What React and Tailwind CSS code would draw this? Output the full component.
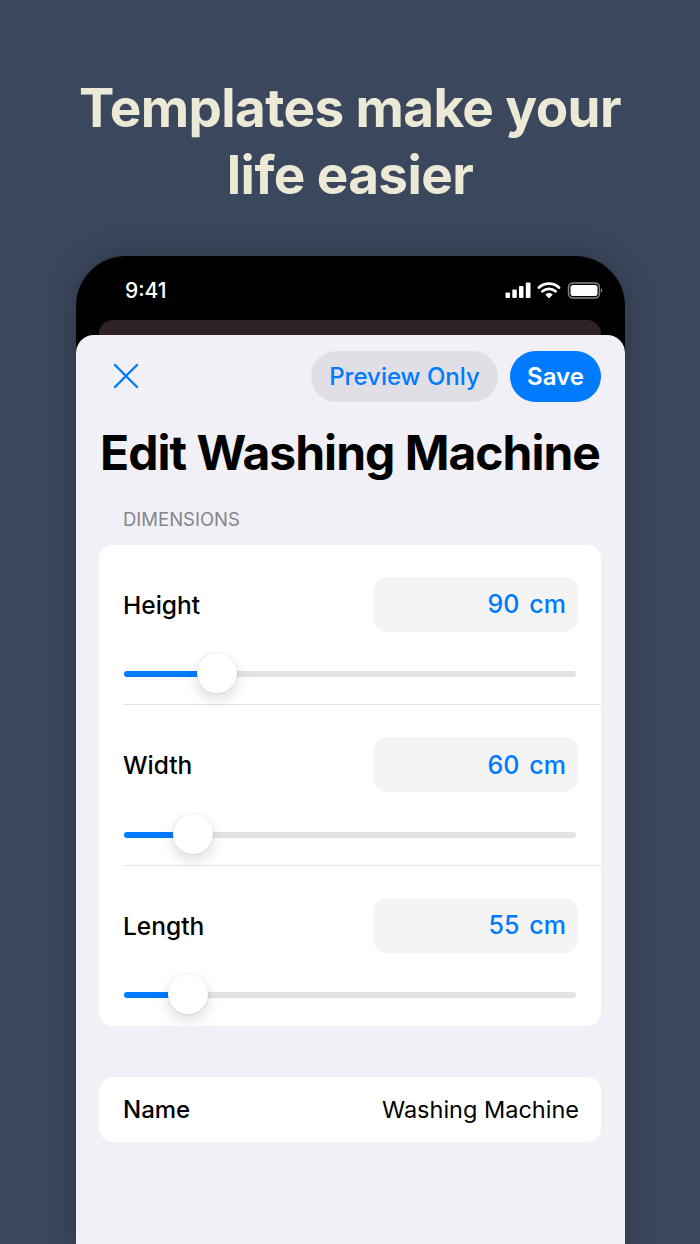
const sliders = [
  { label: "Height", value: 90, pos: 93 },
  { label: "Width", value: 60, pos: 69 },
  { label: "Length", value: 55, pos: 64 },
];

function StatusIcons() {
  return (
    <svg width="98" height="20" viewBox="0 0 98 20" fill="none">
      <rect x="0.500" y="11.500" width="4.500" height="5.500" rx="1" fill="#fff" />
      <rect x="7.300" y="8.500" width="4.500" height="8.500" rx="1" fill="#fff" />
      <rect x="14" y="5" width="4.500" height="12" rx="1" fill="#fff" />
      <rect x="20.800" y="1.500" width="4.700" height="15.500" rx="1" fill="#fff" />
      <path d="M34 6.500a15 15 0 0 1 20 0" stroke="#fff" strokeWidth="2.800" strokeLinecap="round" />
      <path d="M37.500 10.300a10 10 0 0 1 13 0" stroke="#fff" strokeWidth="2.800" strokeLinecap="round" />
      <path d="M40.800 13.500a5 5 0 0 1 6.400 0L44 17z" fill="#fff" stroke="#fff" strokeWidth="1" strokeLinejoin="round" />
      <rect x="63.500" y="2" width="31" height="15" rx="4.500" stroke="#8a8a8a" strokeWidth="1.400" />
      <rect x="65.500" y="4" width="27" height="11" rx="2.500" fill="#fff" />
      <path d="M96 7.500c1 .3 1.200 1.200 1.200 2s-.2 1.700-1.200 2z" fill="#8a8a8a" />
    </svg>
  );
}

function SliderRow({ label, value, pos, last }) {
  return (
    <div className="relative h-[160.500px] pl-6">
      <div className={`h-full pr-[23px] ${last ? "" : "border-b border-[#e3e3e6]"}`}>
        <div className="flex items-center justify-between pt-8">
          <span className="pt-[2px] text-[24.500px] font-medium text-black">{label}</span>
          <div className="flex h-[55px] w-[205px] items-center justify-end gap-[10px] rounded-[14px] bg-[#f4f4f5] pr-3 pt-[2px] text-[25px] font-medium text-[#007aff]">
            <span>{value}</span>
            <span>cm</span>
          </div>
        </div>
        <div className="relative ml-px mt-[39.500px] h-[6px] w-[452px] rounded-full bg-[#e3e3e6]">
          <div className="h-full rounded-full bg-[#007aff]" style={{ width: pos }} />
          <div
            className="absolute top-[-18px] h-[40px] w-[40px] -translate-x-1/2 rounded-full bg-white shadow-[0_6px_14px_rgba(0,0,0,0.14),0_0_2px_rgba(0,0,0,0.12)]"
            style={{ left: pos }}
          />
        </div>
      </div>
    </div>
  );
}

export default function App() {
  return (
    <div className="h-[1244px] w-[700px] overflow-hidden bg-[#3b475d] font-['Inter',sans-serif]">
      <h1 className="pt-[75px] text-center text-[53px] font-bold leading-[67px] tracking-[-0.6px] text-[#ece9d6]">
        Templates make your
        <br />
        life easier
      </h1>

      {/* phone */}
      <div className="ml-[76px] mt-[47px] h-[1000px] w-[549px] overflow-hidden rounded-t-[50px] bg-black shadow-[0_0_30px_rgba(0,0,0,0.25)]">
        <div className="flex h-[64px] items-center justify-between pl-[49px] pr-[22px] pt-[6px]">
          <span className="text-[21px] font-medium text-white">9:41</span>
          <StatusIcons />
        </div>
        <div className="ml-[23px] mr-6 h-[20px] rounded-t-[14px] bg-[#2f2226]" />

        <div className="mt-[-5px] h-[920px] rounded-t-[18px] bg-[#f1f0f6] pl-[23px] pr-6">
          <div className="flex items-center justify-between pt-4">
            <svg width="26" height="26" viewBox="0 0 26 26" className="ml-[14px] mt-[-2px]" fill="none" stroke="#007aff" strokeWidth="2.400" strokeLinecap="round">
              <path d="M2 2L24 24M24 2L2 24" />
            </svg>
            <div className="flex gap-3">
              <div className="flex h-[51px] w-[187px] items-center justify-center rounded-full bg-[#dfdfe5] text-[24px] font-medium text-[#007aff]">
                Preview Only
              </div>
              <div className="flex h-[51px] w-[91px] items-center justify-center rounded-full bg-[#007aff] text-[24px] font-semibold text-white">
                Save
              </div>
            </div>
          </div>

          <h2 className="mt-[21px] whitespace-nowrap text-center text-[48px] font-bold leading-[60px] tracking-[-1px] text-black">
            Edit Washing Machine
          </h2>

          <p className="mt-[24px] pl-6 text-[18.500px] leading-[24px] text-[#85858b]">DIMENSIONS</p>

          <div className="mt-[13.500px] overflow-hidden rounded-[14px] bg-white">
            {sliders.map((s, i) => (
              <SliderRow key={s.label} {...s} last={i === sliders.length - 1} />
            ))}
          </div>

          <div className="mt-[51px] flex h-[65px] items-center justify-between rounded-[14px] bg-white pl-6 pr-[22px]">
            <span className="text-[24px] font-medium text-black">Name</span>
            <span className="text-[23.500px] text-black">Washing Machine</span>
          </div>
        </div>
      </div>
    </div>
  );
}
